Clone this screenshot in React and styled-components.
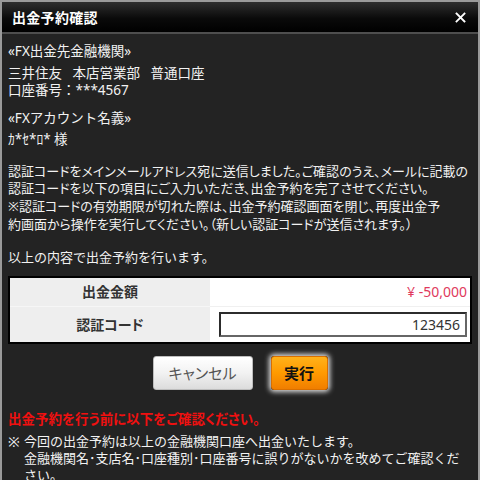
import styled, { createGlobalStyle } from 'styled-components';

const GlobalStyle = createGlobalStyle`
    html, body {
        margin: 0;
        padding: 0;
        background: #232323;
    }
`;

const JP = `"Noto Sans", "Noto Sans CJK JP", sans-serif`;

const Dialog = styled.div`
    width: 480px;
    height: 480px;
    box-sizing: border-box;
    border: 2px solid #9a9a9a;
    border-bottom: none;
    background: #232323;
    overflow: hidden;
    display: flex;
    flex-direction: column;
    font-family: ${JP};
    color: #f2f2f2;
`;

const TitleBar = styled.div`
    height: 30px;
    flex-shrink: 0;
    display: flex;
    align-items: center;
    justify-content: space-between;
    padding: 0 12px 0 10px;
    background: linear-gradient(to bottom, #2e2e2e 0%, #0a0a0a 55%, #000 100%);
    border-bottom: 2px solid #4e4e4e;
`;

const Title = styled.div`
    font-size: 14px;
    font-weight: 700;
    color: #fff;
    letter-spacing: 0.3px;
    font-feature-settings: 'palt';
`;

const Close = styled.button`
    background: none;
    border: none;
    padding: 0;
    width: 11px;
    height: 11px;
    display: flex;
    cursor: pointer;
`;

const Body = styled.div`
    padding: 9px 6px 0 6px;
    font-size: 13px;
    line-height: 17.5px;
`;

const Section = styled.div`
    margin-bottom: ${p => p.$gap || 0}px;
    font-size: ${p => p.$size || 13}px;
    white-space: nowrap;
`;

const Heading = styled.div`
    margin-bottom: 4px;
`;

const Paragraph = styled.div`
    line-height: 17.7px;
    white-space: nowrap;
    font-feature-settings: 'palt';
`;

const Table = styled.div`
    display: grid;
    grid-template-columns: 200px 1fr;
    border: 2px solid #000;
    background: #fff;
`;

const Label = styled.div`
    background: #eeeeee;
    color: #333;
    font-weight: 700;
    font-size: 14px;
    display: flex;
    align-items: center;
    justify-content: center;
    height: ${p => p.$h}px;
    font-feature-settings: 'palt';
    border-top: ${p => (p.$first ? 'none' : '1px solid #f6f6f6')};
`;

const Value = styled.div`
    display: flex;
    align-items: center;
    justify-content: flex-end;
    padding: 0 3px 0 9px;
    height: ${p => p.$h}px;
    border-top: ${p => (p.$first ? 'none' : '1px solid #f0f0f0')};
`;

const Amount = styled.span`
    color: #e0395c;
    font-size: 14px;
    font-family: "Noto Sans", sans-serif;
`;

const CodeInput = styled.input`
    width: 100%;
    height: 25px;
    box-sizing: border-box;
    border: 2px solid #2c2c2c;
    border-right-color: #666;
    border-bottom-color: #666;
    text-align: right;
    font-family: "Noto Sans", sans-serif;
    font-size: 14px;
    color: #333;
    padding: 0 5px;
    outline: none;
`;

const Buttons = styled.div`
    display: flex;
    justify-content: center;
    gap: 18px;
    margin-top: 12px;
`;

const Button = styled.button`
    height: 34px;
    width: ${p => p.$w}px;
    border-radius: 3px;
    font-family: ${JP};
    font-size: 15px;
    cursor: pointer;
    padding: 0;
    font-feature-settings: 'palt';
    ${p => p.$primary ? `
        background: linear-gradient(to bottom, #ffb21a 0%, #ff9a00 50%, #f07e00 100%);
        border: 1px solid #d97000;
        color: #111;
        font-weight: 700;
        box-shadow: 0 0 5px 2px rgba(255, 255, 255, 0.85);
    ` : `
        background: linear-gradient(to bottom, #ffffff 0%, #f2f2f2 50%, #dcdcdc 100%);
        border: 1px solid #bdbdbd;
        color: #555;
    `}
`;

const Warning = styled.div`
    margin-top: 21px;
    color: #f01010;
    font-weight: 700;
    font-size: 13.5px;
    line-height: 17.5px;
    font-feature-settings: 'palt';
`;

const Note = styled.div`
    display: flex;
    margin-top: 5px;
    line-height: 17px;
    white-space: nowrap;
`;

const Mark = styled.span`
    width: 16px;
    flex-shrink: 0;
    font-size: 14px;
`;

export default function App() {
    return (
        <>
            <GlobalStyle />
            <Dialog>
                <TitleBar>
                    <Title>出金予約確認</Title>
                    <Close aria-label="閉じる">
                        <svg width="11" height="11" viewBox="0 0 11 11">
                            <path d="M1.5 1.5 L9.5 9.5 M9.5 1.5 L1.5 9.5" stroke="#fff" strokeWidth="1.8" strokeLinecap="square" />
                        </svg>
                    </Close>
                </TitleBar>
                <Body>
                    <Section $gap={10} $size={13.5}>
                        <Heading>«FX出金先金融機関»</Heading>
                        <div>三井住友&nbsp;&nbsp;&nbsp;本店営業部&nbsp;&nbsp;&nbsp;普通口座</div>
                        <div>口座番号：***4567</div>
                    </Section>
                    <Section $gap={14} $size={13.5}>
                        <Heading>«FXアカウント名義»</Heading>
                        <div>ｶ*ｾ*ﾛ* 様</div>
                    </Section>
                    <Section $gap={16}>
                        <Paragraph>
                            認証コードをメインメールアドレス宛に送信しました。ご確認のうえ、メールに記載の<br />
                            認証コードを以下の項目にご入力いただき、出金予約を完了させてください。<br />
                            ※認証コードの有効期限が切れた際は、出金予約確認画面を閉じ、再度出金予<br />
                            約画面から操作を実行してください。（新しい認証コードが送信されます。）
                        </Paragraph>
                    </Section>
                    <Section $gap={9}>以上の内容で出金予約を行います。</Section>
                    <Table>
                        <Label $h={28} $first>出金金額</Label>
                        <Value $h={28} $first><Amount>¥ -50,000</Amount></Value>
                        <Label $h={35}>認証コード</Label>
                        <Value $h={35}><CodeInput defaultValue="123456" /></Value>
                    </Table>
                    <Buttons>
                        <Button $w={100}>キャンセル</Button>
                        <Button $w={57} $primary>実行</Button>
                    </Buttons>
                    <Warning>出金予約を行う前に以下をご確認ください。</Warning>
                    <Note>
                        <Mark>※</Mark>
                        <div>
                            今回の出金予約は以上の金融機関口座へ出金いたします。<br />
                            金融機関名･支店名･口座種別･口座番号に誤りがないかを改めてご確認くだ<br />
                            さい。
                        </div>
                    </Note>
                </Body>
            </Dialog>
        </>
    );
}
